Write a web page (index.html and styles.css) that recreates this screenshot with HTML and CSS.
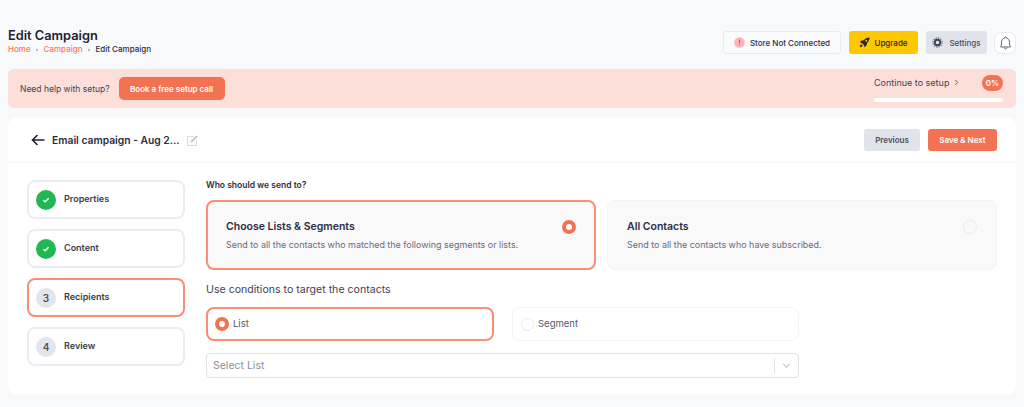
FILE: index.html
```html
<!DOCTYPE html>
<html lang="en">
<head>
<meta charset="utf-8">
<title>Edit Campaign</title>
<link rel="stylesheet" href="styles.css">
</head>
<body>
<header class="topbar">
  <div class="heading">
    <h1 class="title">Edit Campaign</h1>
    <nav class="crumbs">
      <span class="crumb-link">Home</span><i class="dot"></i><span class="crumb-link">Campaign</span><i class="dot"></i><span>Edit Campaign</span>
    </nav>
  </div>
  <div class="actions">
    <div class="store">
      <svg class="ico-alert" viewBox="0 0 12 12"><circle cx="6" cy="6" r="5.8" fill="#fbb6bd"/><rect x="5.400" y="2.800" width="1.200" height="4" rx=".5" fill="#e5484d"/><rect x="5.400" y="7.900" width="1.200" height="1.200" rx=".5" fill="#e5484d"/></svg>
      <span>Store Not Connected</span>
    </div>
    <div class="upgrade">
      <svg class="ico-rocket" viewBox="0 0 12 12"><path d="M11.500.5C8.800.6 6.600 1.700 5 3.600L2.800 3.800.8 6l2.300.5 2.400 2.400L6 11.200l2.200-2 .2-2.200C10.300 5.400 11.400 3.200 11.500.5z" fill="#27272f"/><circle cx="8" cy="4" r="1.100" fill="#ffc700"/><path d="M2.500 8c-1 .5-1.500 1.500-1.700 3.200C2.500 11 3.500 10.500 4 9.500z" fill="#27272f"/></svg>
      <span>Upgrade</span>
    </div>
    <div class="settings">
      <svg class="ico-gear" viewBox="0 0 12 12"><circle cx="6" cy="6" r="3" fill="none" stroke="#3f4254" stroke-width="2"/><circle cx="6" cy="6" r="5" fill="none" stroke="#6b7080" stroke-width="1.400" stroke-dasharray="1.400 1.200"/></svg>
      <span>Settings</span>
    </div>
    <div class="bell">
      <svg class="ico-bell" viewBox="0 0 16 18"><path d="M8 1.500a1 1 0 0 1 1 1v.4c2.400.5 3.900 2.500 3.900 5v2.300c0 1 .5 1.900 1.300 2.800.3.400.1.900-.4.900H2.200c-.5 0-.7-.5-.4-.9.800-.9 1.300-1.800 1.300-2.800V7.900c0-2.500 1.500-4.500 3.900-5v-.4a1 1 0 0 1 1-1zM6.200 14.500c.2 1 .9 1.800 1.800 1.800s1.600-.8 1.800-1.800" fill="none" stroke="#5c6070" stroke-width="1.200" stroke-linejoin="round"/></svg>
    </div>
  </div>
</header>

<section class="banner">
  <div class="banner-left">
    <span class="help">Need help with setup?</span>
    <span class="book">Book a free setup call</span>
  </div>
  <div class="progress">
    <div class="progress-row">
      <span class="continue">Continue to setup <svg class="ico-chev" viewBox="0 0 6 8"><path d="M1.500 1l3 3-3 3" fill="none" stroke="#3f4254" stroke-width="1"/></svg></span>
      <span class="pct">0%</span>
    </div>
    <div class="bar"></div>
  </div>
</section>

<main class="card">
  <div class="card-head">
    <div class="head-left">
      <svg class="ico-back" viewBox="0 0 14 12"><path d="M13.500 6H1.500M6.500 1 1.500 6l5 5" fill="none" stroke="#1f2233" stroke-width="1.600"/></svg>
      <span class="camp-name">Email campaign - Aug 2...</span>
      <svg class="ico-edit" viewBox="0 0 11 11"><path d="M0 1h7v1H1v8h8V5h1v6H0z" fill="#d9dbe4"/><path d="M3.800 5.800 9.400.4l1.300 1.300-5.500 5.500-1.800.4z" fill="#c3c6d2"/></svg>
    </div>
    <div class="head-right">
      <span class="btn-prev">Previous</span>
      <span class="btn-next">Save &amp; Next</span>
    </div>
  </div>
  <div class="card-body">
    <ul class="steps">
      <li class="step"><span class="badge done"><svg class="ico-check" viewBox="0 0 10 8"><path d="M1.500 4.200 3.800 6.300 8.500 1.800" fill="none" stroke="#fff" stroke-width="1.800"/></svg></span><span class="step-label">Properties</span></li>
      <li class="step"><span class="badge done"><svg class="ico-check" viewBox="0 0 10 8"><path d="M1.500 4.200 3.800 6.300 8.500 1.800" fill="none" stroke="#fff" stroke-width="1.800"/></svg></span><span class="step-label">Content</span></li>
      <li class="step active"><span class="badge">3</span><span class="step-label">Recipients</span></li>
      <li class="step"><span class="badge">4</span><span class="step-label">Review</span></li>
    </ul>
    <div class="form">
      <div class="q">Who should we send to?</div>
      <div class="choices">
        <div class="choice selected">
          <div>
            <div class="choice-title">Choose Lists &amp; Segments</div>
            <div class="choice-sub">Send to all the contacts who matched the following segments or lists.</div>
          </div>
          <span class="radio on"></span>
        </div>
        <div class="choice">
          <div>
            <div class="choice-title">All Contacts</div>
            <div class="choice-sub">Send to all the contacts who have subscribed.</div>
          </div>
          <span class="radio"></span>
        </div>
      </div>
      <div class="cond">Use conditions to target the contacts</div>
      <div class="narrow">
        <div class="options">
          <div class="option selected"><span class="radio on"></span><span class="option-label">List</span></div>
          <div class="option"><span class="radio"></span><span class="option-label">Segment</span></div>
        </div>
        <div class="select">
          <span>Select List</span>
          <span class="select-ind"><svg class="ico-down" viewBox="0 0 10 6"><path d="M1 1l4 4 4-4" fill="none" stroke="#c4c6cc" stroke-width="1.300"/></svg></span>
        </div>
      </div>
    </div>
  </div>
</main>
</body>
</html>
```
FILE: styles.css
```css
* { box-sizing: border-box; }
html, body { margin: 0; padding: 0; }
body {
  width: 1024px;
  height: 407px;
  overflow: hidden;
  padding: 0 8px;
  background: #f8f9fb;
  font-family: Inter, "Liberation Sans", sans-serif;
  color: #2b2d42;
}
.topbar {
  display: flex;
  justify-content: space-between;
  align-items: flex-start;
  height: 69px;
  padding-top: 28px;
}
.title {
  margin: 0;
  font-size: 12.800px;
  line-height: 16px;
  font-weight: 600;
  color: #1f2233;
}
.crumbs {
  display: flex;
  align-items: center;
  font-size: 8px;
  line-height: 11px;
  font-weight: 500;
  color: #2b2d42;
}
.crumb-link { color: #f9785c; }
.dot {
  width: 2px;
  height: 2px;
  margin: 0 5.500px;
  border-radius: 50%;
  background: #a1a5b7;
}
.actions {
  display: flex;
  align-items: center;
  margin-top: 3px;
}
.store, .upgrade, .settings {
  display: flex;
  align-items: center;
  height: 23px;
  border-radius: 3px;
  font-size: 8px;
  font-weight: 500;
}
.store {
  width: 118px;
  justify-content: center;
  gap: 5px;
  background: #fafbfc;
  border: 1px solid #e9eaef;
}
.upgrade {
  width: 69px;
  margin-left: 8px;
  justify-content: center;
  gap: 4px;
  background: #ffc700;
  color: #27272f;
}
.settings {
  width: 61px;
  margin-left: 8px;
  justify-content: center;
  gap: 6px;
  background: #e0e3ea;
  color: #4b4f60;
}
.bell {
  display: flex;
  align-items: center;
  justify-content: center;
  width: 22px;
  height: 22px;
  margin-left: 7px;
  margin-top: 1px;
  border: 1px solid #e9eaef;
  border-radius: 7px;
  background: #fff;
}
.ico-alert { width: 11px; height: 11px; }
.ico-rocket { width: 11px; height: 11px; }
.ico-gear { width: 11px; height: 11px; }
.ico-bell { width: 13px; height: 16px; }

.banner {
  display: flex;
  justify-content: space-between;
  height: 39px;
  padding: 0 13px 0 12px;
  background: #fddfd9;
  border-radius: 6px;
}
.banner-left {
  display: flex;
  align-items: center;
  gap: 9px;
}
.help { font-size: 8.500px; color: #3f4254; }
.book {
  display: flex;
  align-items: center;
  justify-content: center;
  width: 106px;
  height: 23px;
  border-radius: 5px;
  background: #f47254;
  color: #fff;
  font-size: 8px;
  font-weight: 600;
}
.progress {
  width: 129px;
  padding-top: 6px;
}
.progress-row {
  display: flex;
  align-items: center;
  justify-content: space-between;
  height: 16px;
}
.continue {
  display: flex;
  align-items: center;
  gap: 5px;
  padding-bottom: 2px;
  font-size: 9px;
  color: #3f4254;
}
.ico-chev { width: 5px; height: 7px; }
.pct {
  display: flex;
  align-items: center;
  justify-content: center;
  width: 21px;
  height: 16px;
  border-radius: 8px;
  background: #f47254;
  color: #fff;
  font-size: 8px;
  font-weight: 600;
}
.bar {
  height: 4px;
  margin-top: 7px;
  border-radius: 2px;
  background: #fff;
}

.card {
  height: 276px;
  margin-top: 10px;
  background: #fff;
  border-radius: 8px;
}
.card-head {
  display: flex;
  align-items: center;
  justify-content: space-between;
  height: 45px;
  padding: 0 19px 0 23px;
  border-bottom: 1px solid #f6f7f9;
}
.head-left {
  display: flex;
  align-items: center;
}
.ico-back { width: 14px; height: 12px; margin-right: 7px; }
.camp-name {
  font-size: 10.300px;
  font-weight: 600;
  color: #2b2d42;
}
.ico-edit { width: 11px; height: 11px; margin-left: 7px; }
.head-right { display: flex; gap: 8px; }
.btn-prev, .btn-next {
  display: flex;
  align-items: center;
  justify-content: center;
  height: 22px;
  border-radius: 3px;
  font-size: 8px;
  font-weight: 600;
}
.btn-prev { width: 56px; background: #e0e3ea; color: #4b4f60; }
.btn-next { width: 69px; background: #f47254; color: #fff; }

.card-body {
  display: flex;
  padding: 17px 19px 0;
  gap: 21px;
}
.steps {
  list-style: none;
  margin: 0;
  padding: 0;
  width: 158px;
  flex: none;
  display: flex;
  flex-direction: column;
  gap: 10px;
}
.step {
  display: flex;
  align-items: center;
  gap: 8px;
  height: 39px;
  padding-left: 7px;
  border: 2px solid #ebecf1;
  border-radius: 8px;
  font-size: 9px;
  font-weight: 600;
  color: #3a3d50;
}
.step-label { padding-bottom: 2px; }
.step.active { border-color: #fb8d74; }
.badge {
  display: flex;
  align-items: center;
  justify-content: center;
  width: 20px;
  height: 20px;
  border-radius: 50%;
  background: #e3e5ec;
  color: #4b4f60;
  font-size: 10px;
}
.badge.done { background: #1fb855; }
.ico-check { width: 8px; height: 6px; }

.form { flex: 1; min-width: 0; }
.q {
  height: 20px;
  font-size: 8.500px;
  line-height: 11px;
  font-weight: 600;
  color: #2b2d42;
}
.choices { display: flex; gap: 11px; }
.choice {
  flex: 1;
  display: flex;
  justify-content: space-between;
  height: 70px;
  padding: 19px 19px 0 19px;
  background: #f9f9fa;
  border: 1px solid #f2f3f5;
  border-radius: 8px;
}
.choice.selected {
  padding: 18px 18px 0 18px;
  border: 2px solid #fb8d74;
}
.choice-title {
  font-size: 10.500px;
  line-height: 14px;
  font-weight: 600;
  color: #2b2d42;
}
.choice-sub {
  margin-top: 5px;
  font-size: 8.950px;
  line-height: 12px;
  color: #676a7c;
}
.radio {
  flex: none;
  width: 14px;
  height: 14px;
  border-radius: 50%;
  border: 1px solid #e9eaef;
  background: transparent;
}
.radio.on { border: 4px solid #f47254; background: #fff; }
.cond {
  height: 37px;
  padding-top: 13px;
  font-size: 10.600px;
  line-height: 14px;
  color: #3f4254;
}
.narrow { width: 593px; }
.options { display: flex; gap: 18px; }
.option {
  flex: 1;
  display: flex;
  align-items: center;
  gap: 4px;
  height: 34px;
  padding-left: 8px;
  border: 1px solid #f2f3f5;
  border-radius: 8px;
  font-size: 9.500px;
  color: #565969;
}
.option-label { padding-bottom: 2px; }
.option .radio { width: 13px; height: 13px; }
.option.selected {
  padding-left: 7px;
  border: 2px solid #fb8d74;
}
.option.selected .radio { width: 14px; height: 14px; }
.select {
  display: flex;
  align-items: center;
  justify-content: space-between;
  height: 25px;
  margin-top: 12px;
  padding-left: 6px;
  border: 1px solid #dfe0e3;
  border-radius: 4px;
  font-size: 10.500px;
  color: #8d8f97;
}
.select-ind {
  display: flex;
  align-items: center;
  justify-content: center;
  width: 24px;
  height: 15px;
  border-left: 1px solid #dfe0e3;
}
.ico-down { width: 9px; height: 5px; }
```
